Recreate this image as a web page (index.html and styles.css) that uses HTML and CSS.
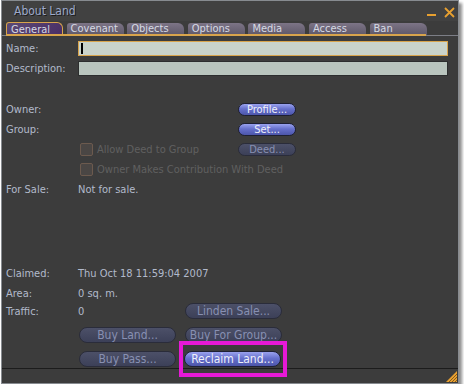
FILE: index.html
```html
<!DOCTYPE html>
<html lang="en">
<head>
  <meta charset="UTF-8" />
  <title>About Land</title>
  <link rel="stylesheet" href="styles.css">
</head>
<body>
  <div class="window">
    <div class="titlebar">
      <span class="title">About Land</span>
      <div class="controls">
        <svg width="10" height="10" viewBox="0 0 10 10"><rect x="0" y="7" width="9" height="2" fill="#e8a030"/></svg>
        <svg width="11" height="11" viewBox="0 0 11 11"><path d="M1 1 L10 10 M10 1 L1 10" stroke="#e8a030" stroke-width="1.8"/></svg>
      </div>
    </div>

    <div class="tabs">
      <div class="tab active">General</div>
      <div class="tab">Covenant</div>
      <div class="tab">Objects</div>
      <div class="tab">Options</div>
      <div class="tab">Media</div>
      <div class="tab">Access</div>
      <div class="tab">Ban</div>
    </div>

    <div class="content">
      <div class="row field">
        <span class="label">Name:</span>
        <div class="input focused"><span class="caret"></span></div>
      </div>
      <div class="row field">
        <span class="label">Description:</span>
        <div class="input"></div>
      </div>

      <div class="group top">
        <div class="row line">
          <span class="label">Owner:</span>
          <span class="value"></span>
          <button class="btn small">Profile...</button>
        </div>
        <div class="row line">
          <span class="label">Group:</span>
          <span class="value"></span>
          <button class="btn small">Set...</button>
        </div>
        <div class="row line">
          <span class="label"></span>
          <span class="value check"><span class="box"></span>Allow Deed to Group</span>
          <button class="btn small off">Deed...</button>
        </div>
        <div class="row line">
          <span class="label"></span>
          <span class="check free"><span class="box"></span>Owner Makes Contribution With Deed</span>
        </div>
        <div class="row line">
          <span class="label">For Sale:</span>
          <span class="value">Not for sale.</span>
        </div>
      </div>

      <div class="group bottom">
        <div class="row line">
          <span class="label">Claimed:</span>
          <span class="value">Thu Oct 18 11:59:04 2007</span>
        </div>
        <div class="row line">
          <span class="label">Area:</span>
          <span class="value">0 sq. m.</span>
        </div>
        <div class="row btnrow">
          <span class="label">Traffic:</span>
          <span class="value short">0</span>
          <button class="btn wide off">Linden Sale...</button>
        </div>
        <div class="row btnrow">
          <span class="label"></span>
          <button class="btn wide off">Buy Land...</button>
          <button class="btn wide off">Buy For Group...</button>
        </div>
        <div class="row btnrow">
          <span class="label"></span>
          <button class="btn wide off">Buy Pass...</button>
          <div class="mark">
            <button class="btn wide">Reclaim Land...</button>
            <span class="highlight"></span>
          </div>
        </div>
      </div>
    </div>

    <div class="footer">
      <svg class="grip" width="11" height="11" viewBox="0 0 11 11">
        <path d="M0 11 L11 0 L11 11 Z" fill="#e8a030"/>
        <path d="M3 11 L11 3 M6 11 L11 6 M9 11 L11 9" stroke="#7a5418" stroke-width="0.9"/>
      </svg>
    </div>
  </div>
</body>
</html>
```

FILE: styles.css
```css
body {
  margin: 0;
  background: #ffffff;
  font-family: "DejaVu Sans Condensed", "DejaVu Sans", sans-serif;
  font-size: 11px;
}

.window {
  box-sizing: border-box;
  width: 458px;
  height: 384px;
  margin-left: 1px;
  border: 1px solid #878b90;
  background: #3c3c3c;
  box-shadow: 3px 3px 3px rgba(0,0,0,0.45);
  display: flex;
  flex-direction: column;
}

.titlebar {
  flex: none;
  height: 20px;
  display: flex;
  align-items: center;
  padding: 0 3px 0 12px;
  background: #414141;
}

.title {
  font-size: 12px;
  color: #9eaacb;
  text-shadow: 1px 1px 0 #1c1c1c;
}

.controls {
  margin-left: auto;
  display: flex;
  gap: 7px;
  align-items: center;
  padding-top: 2px;
}

.tabs {
  flex: none;
  height: 13px;
  margin-top: 1px;
  display: flex;
  gap: 3.6px;
  padding-left: 4px;
  border-bottom: 1px solid #7c7e86;
  position: relative;
}

.tabs::after {
  content: "";
  position: absolute;
  left: 4px;
  bottom: -1px;
  width: 420px;
  height: 2px;
  background: #d8a44c;
}

.tab {
  box-sizing: border-box;
  width: 57px;
  height: 12px;
  margin-top: 1px;
  padding-left: 4px;
  line-height: 12px;
  color: #d6dae4;
  background: linear-gradient(#7c7486, #5e5868);
  border-radius: 3px 6px 0 0;
  overflow: hidden;
  white-space: nowrap;
}

.tab.active {
  height: 13px;
  margin-top: 0;
  line-height: 13px;
  border: 1px solid #d8a44c;
  border-bottom: none;
  padding-left: 4px;
  background: linear-gradient(135deg, #5c4a74, #4a2e66);
}

.content {
  flex: 1;
  min-height: 0;
  padding: 5px 10px 0 4px;
  color: #b2bacb;
}

.row {
  display: flex;
  align-items: center;
}

.label {
  width: 72px;
  flex: none;
}

.field {
  height: 15px;
  margin-bottom: 5px;
}

.input {
  flex: 1;
  box-sizing: border-box;
  height: 15px;
  background: #b9c5be;
  border: 1px solid #2c2e2e;
}

.input.focused {
  background: #c9d3cb;
  border-color: #d8a44c;
  display: flex;
  align-items: center;
  padding-left: 2px;
}

.caret {
  width: 2px;
  height: 11px;
  background: #000;
}

.group.top {
  margin-top: 23px;
}

.line {
  height: 20px;
}

.value {
  width: 160px;
  flex: none;
}

.value.short {
  width: 107px;
}

.check {
  display: flex;
  align-items: center;
  color: #606060;
  margin-left: 2px;
  width: 158px;
  white-space: nowrap;
}

.check.free {
  width: auto;
}

.box {
  box-sizing: border-box;
  width: 13px;
  height: 13px;
  margin-right: 4px;
  border: 1px solid #6c5a4e;
  border-radius: 2px;
  background: #4a4644;
}

.btn {
  box-sizing: border-box;
  height: 16px;
  padding: 0;
  font-family: inherit;
  font-size: 12px;
  line-height: 14px;
  color: #eef0fa;
  border: 1px solid #1e2034;
  border-radius: 8px;
  background: linear-gradient(#9aa2ee, #6670cc 45%, #4c55aa);
}

.btn.small {
  width: 58px;
  height: 13px;
  font-size: 11px;
  line-height: 11px;
}

.btn.wide {
  width: 97px;
}

.btn.off {
  color: #8890b2;
  border-color: #2a2c3a;
  background: linear-gradient(#4c5068, #3c4058);
}

.group.bottom {
  margin-top: 64px;
}

.btnrow {
  height: 16px;
  margin-bottom: 8px;
}

.btnrow .btn.wide:first-of-type {
  margin-right: 9px;
}

.btnrow .label + .btn {
  margin-left: 1px;
}

.mark {
  position: relative;
  display: flex;
  margin-left: -1px;
}

.highlight {
  position: absolute;
  left: -5px;
  top: -10px;
  width: 108px;
  height: 36px;
  box-sizing: border-box;
  border: 4px solid #e619d6;
}

.footer {
  flex: none;
  height: 14px;
  border-top: 1px solid #1c1c1c;
  display: flex;
  justify-content: flex-end;
  align-items: flex-end;
}

.grip {
  margin: 0 1px 1px 0;
}
```
